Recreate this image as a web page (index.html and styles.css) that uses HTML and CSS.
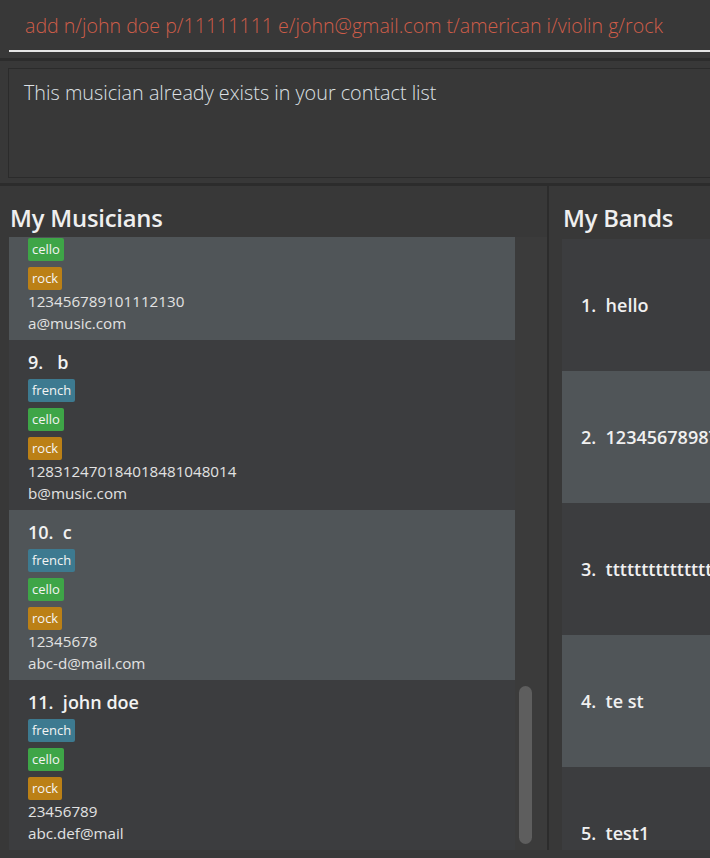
FILE: index.html
```html
<!DOCTYPE html>
<html>

<head>
	<title>Band Book</title>
	<link rel="stylesheet" href="styles.css">
</head>

<body>
	<div class="command-bar">
		<div class="command-input">add n/john doe p/11111111 e/john@gmail.com t/american i/violin g/rock</div>
	</div>

	<div class="result-bar">
		<div class="result-box">This musician already exists in your contact list</div>
	</div>

	<div class="main">
		<div class="panel musicians">
			<h1>My Musicians</h1>
			<div class="list-wrap">
				<div class="list">
					<!-- list is scrolled, only the lower part of card 8 shows -->
					<div class="card light partial">
						<span class="tag instrument">cello</span>
						<span class="tag genre">rock</span>
						<div class="info">123456789101112130</div>
						<div class="info">a@music.com</div>
					</div>
					<div class="card">
						<div class="name">9.&nbsp;&nbsp;&nbsp;b</div>
						<span class="tag nation">french</span>
						<span class="tag instrument">cello</span>
						<span class="tag genre">rock</span>
						<div class="info">128312470184018481048014</div>
						<div class="info">b@music.com</div>
					</div>
					<div class="card light">
						<div class="name">10.&nbsp;&nbsp;c</div>
						<span class="tag nation">french</span>
						<span class="tag instrument">cello</span>
						<span class="tag genre">rock</span>
						<div class="info">12345678</div>
						<div class="info">abc-d@mail.com</div>
					</div>
					<div class="card">
						<div class="name">11.&nbsp;&nbsp;john doe</div>
						<span class="tag nation">french</span>
						<span class="tag instrument">cello</span>
						<span class="tag genre">rock</span>
						<div class="info">23456789</div>
						<div class="info">abc.def@mail</div>
					</div>
				</div>
				<div class="scroll-track">
					<div class="scroll-thumb"></div>
				</div>
			</div>
		</div>

		<div class="divider"></div>

		<div class="panel bands">
			<h1>My Bands</h1>
			<div class="band-list">
				<div class="band">1.&nbsp;&nbsp;hello</div>
				<div class="band light">2.&nbsp;&nbsp;123456789876543</div>
				<div class="band">3.&nbsp;&nbsp;ttttttttttttttttttt</div>
				<div class="band light">4.&nbsp;&nbsp;te st</div>
				<div class="band">5.&nbsp;&nbsp;test1</div>
			</div>
		</div>
	</div>
</body>

</html>
```

FILE: styles.css
```css
body {
	font-family: "Open Sans", "Noto Sans", sans-serif;
	background-color: #383838;
	color: #fff;
	margin: 0;
	padding: 0;
	width: 710px;
	height: 858px;
	overflow: hidden;
}

.command-bar {
	height: 61px;
	padding-left: 9px;
	border-bottom: 3px solid #2c2c2c;
	box-sizing: border-box;
}

.command-input {
	height: 52px;
	box-sizing: border-box;
	border-bottom: 2px solid #e6e6e6;
	padding: 12px 0 0 16px;
	font-size: 19.6px;
	font-weight: 300;
	color: #cf5d49;
	white-space: nowrap;
	overflow: hidden;
}

.result-bar {
	height: 125px;
	padding: 7px 0 0 8px;
	box-sizing: border-box;
	border-bottom: 3px solid #2c2c2c;
}

.result-box {
	height: 110px;
	box-sizing: border-box;
	border: 1px solid #2b2b2b;
	border-right: none;
	padding: 10px 0 0 15px;
	font-size: 19.8px;
	font-weight: 300;
	color: #dde0e4;
	white-space: nowrap;
}

.main {
	display: flex;
	height: 672px;
}

.panel {
	display: flex;
	flex-direction: column;
}

.panel h1 {
	margin: 0;
	height: 51px;
	padding-top: 14px;
	box-sizing: border-box;
	font-size: 23.8px;
	font-weight: 600;
	color: #efefef;
	line-height: 36px;
	letter-spacing: -0.2px;
}

.musicians {
	width: 547px;
	padding-left: 9px;
	box-sizing: border-box;
}

.musicians h1 {
	margin-left: 1px;
}

.list-wrap {
	display: flex;
	height: 613px;
	background-color: #3b3b3b;
}

.list {
	width: 506px;
	overflow: hidden;
}

.card {
	height: 170px;
	box-sizing: border-box;
	padding: 8px 0 0 19px;
	background-color: #3c3d3f;
}

.card.light {
	background-color: #505558;
}

.card.partial {
	height: 103px;
	padding-top: 1px;
}

.name {
	height: 28px;
	line-height: 28px;
	font-size: 18px;
	font-weight: 600;
	color: #f2f2f2;
	margin-bottom: 3px;
}

.tag {
	display: table;
	height: 23px;
	line-height: 23px;
	padding: 0 4px;
	margin-bottom: 6px;
	border-radius: 2px;
	font-size: 13px;
	color: #f4f4f4;
}

.tag.genre {
	margin-bottom: 0;
}

.nation {
	background-color: #3d7a90;
}

.instrument {
	background-color: #3ea547;
}

.genre {
	background-color: #bb8016;
}

.info {
	height: 22px;
	line-height: 22px;
	font-size: 15.2px;
	color: #e2e2e2;
}

.scroll-track {
	width: 32px;
	padding: 0 0 0 4px;
	box-sizing: border-box;
	display: flex;
	align-items: flex-end;
}

.scroll-thumb {
	width: 13px;
	height: 158px;
	margin-bottom: 6px;
	border-radius: 7px;
	background-color: #5e5e5e;
}

.divider {
	width: 2px;
	height: 664px;
	background-color: #2c2c2c;
}

.bands {
	flex: 1;
	padding-left: 13px;
	overflow: hidden;
}

.bands h1 {
	margin-left: 1px;
}

.band-list {
	margin-top: 2px;
	height: 611px;
	overflow: hidden;
	background-color: #3c3d3f;
}

.band {
	height: 132px;
	line-height: 132px;
	padding-left: 19px;
	font-size: 18px;
	font-weight: 600;
	color: #f0f0f0;
	white-space: nowrap;
	background-color: #3c3d3f;
}

.band.light {
	background-color: #505558;
}
```
